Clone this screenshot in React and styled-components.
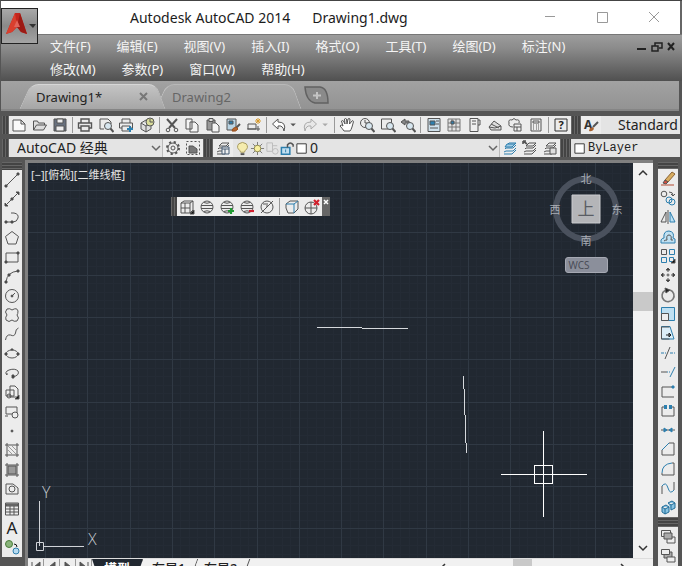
import styled, { createGlobalStyle, css } from "styled-components";

const GlobalStyle = createGlobalStyle`
    * {
        box-sizing: border-box;
    }

    body {
        margin: 0;
        overflow: hidden;
        background-color: #555;
        font-family: "Noto Sans", "Noto Sans CJK SC", sans-serif;
    }

    button, select {
        font-family: inherit;
        margin: 0;
        padding: 0;
        border: 0;
        background: none;
    }
`

const Window = styled.div`
    display: flex;
    flex-direction: column;
    height: 100vh;
    border-top: 1px solid #444;
    border-left: 1px solid #555;
    position: relative;
    overflow: hidden;
`

const TitleBar = styled.header`
    display: flex;
    flex: 0 0 33px;
    align-items: center;
    justify-content: space-between;
    padding-left: 129px;
    background-color: #fff;
    border-right: 2px solid #666;
`

const Title = styled.h1`
    display: flex;
    gap: 22px;
    margin: 0;
    font-size: 14px;
    font-weight: 400;
    line-height: 20px;
    color: #1c1c1c;
    white-space: pre;
`

const WindowButtons = styled.div`
    display: flex;

    button {
        width: 52px;
        height: 30px;
    }
`

const AppButton = styled.button`
    position: absolute;
    top: 7px;
    left: 0;
    display: flex;
    align-items: center;
    width: 37px;
    height: 36px;
    border: 1px solid #222;
    background: linear-gradient(#a9a9a9, #8a8a8a 50%, #a4a4a4);
`

const MenuBar = styled.nav`
    display: flex;
    flex: 0 0 46px;
    padding-left: 49px;
    background: linear-gradient(#9d9d9d, #8a8a8a 30%, #505050);
    border-top: 1px solid #777;
`

const Menus = styled.div`
    display: flex;
    flex: 1;
    flex-wrap: wrap;
    align-content: flex-start;
    column-gap: 26px;

    button {
        height: 23px;
        font-size: 13px;
        line-height: 23px;
        color: #f4f4f4;
    }
`

const DocButtons = styled.div`
    display: flex;
    padding: 3px 3px 0 16px;

    button {
        width: 15px;
        height: 16px;
    }
`

const TabBar = styled.div`
    display: flex;
    flex: 0 0 30px;
    align-items: flex-end;
    padding-left: 24px;
    margin-right: 3px;
    background: linear-gradient(#a2a2a2, #939393);
    border-bottom: 2px solid #858585;
`

const Tab = styled.button`
    position: relative;
    display: flex;
    align-items: center;
    justify-content: space-between;
    width: 136px;
    height: 25px;
    padding: 0 12px 0 11px;
    font-size: 13px;
    color: ${(p) => (p.$active ? "#222" : "#666")};
    z-index: ${(p) => (p.$active ? 1 : 0)};

    &::before, &::after {
        content: "";
        position: absolute;
        z-index: -1;
        top: 0;
        bottom: 0;
        background: ${(p) => (p.$active ? "linear-gradient(#c4c4c4, #a6a6a6)" : "linear-gradient(#a9a9a9, #9b9b9b)")};
        border-top: 1px solid ${(p) => (p.$active ? "#d6d6d6" : "#b8b8b8")};
    }

    &::before {
        left: 0;
        right: 40%;
        transform: skewX(-24deg);
        border-left: 1px solid #c4c4c4;
        border-radius: 8px 0 0 0;
    }

    &::after {
        left: 40%;
        right: 0;
        transform: skewX(20deg);
        border-right: 1px solid #bdbdbd;
        border-radius: 0 8px 0 0;
    }
`

const NewTab = styled.button`
    width: 26px;
    height: 24px;
    margin-left: 7px;
`

const ToolRow = styled.div`
    display: flex;
    flex: 0 0 18px;
    margin: ${(p) => p.$margin};
`

const Grip = styled.span`
    flex: 0 0 ${(p) => p.$size || 7}px;
    background: ${(p) => (p.$flat
        ? "repeating-linear-gradient(#666 0 1px, #444 1px 3px)"
        : "repeating-linear-gradient(90deg, #666 0 1px, #444 1px 3px)")};
`

const Toolbar = styled.div`
    display: flex;
    flex: ${(p) => p.$flex || "0 0 auto"};
    flex-direction: ${(p) => (p.$column ? "column" : "row")};
    background-color: #ececec;
    min-width: 0;
`

const Tool = styled.button`
    display: flex;
    flex: ${(p) => (p.$fixed ? "0 0 20px" : "1 1 0")};
    align-items: center;
    justify-content: center;
    min-width: 0;
    min-height: 0;

    ${(p) => p.$narrow && css`
        flex: 0 0 11px;
    `}
`

const Separator = styled.span`
    flex: 0 0 1px;
    margin: 1px 2px;
    background-color: #999;
`

const Field = styled.label`
    display: flex;
    flex: ${(p) => p.$flex || "1"};
    align-items: center;
    min-width: 0;
    padding-left: ${(p) => p.$pad || 0}px;
    background-color: #e4e4e4;
    border-right: ${(p) => (p.$line ? "1px solid #bbb" : "0")};
    overflow: hidden;

    select {
        flex: 1;
        min-width: 0;
        height: 18px;
        appearance: none;
        font-family: ${(p) => (p.$mono ? '"Liberation Mono", monospace' : "inherit")};
        font-size: ${(p) => (p.$mono ? 12 : 14)}px;
        line-height: 18px;
        color: #222;
    }

    > svg {
        flex: none;
    }
`

const Workspace = styled.main`
    display: flex;
    flex: 1;
    min-height: 0;
`

const Side = styled.aside`
    display: flex;
    flex-direction: column;
    flex: 0 0 20px;
    margin: ${(p) => p.$margin};
`

const Center = styled.section`
    display: flex;
    flex: 1;
    flex-direction: column;
    min-width: 0;
    border-top: 3px solid #808080;
    border-left: 3px solid #808080;
`

const View = styled.div`
    display: flex;
    flex: 1;
    min-height: 0;
`

const Canvas = styled.div`
    flex: 1;
    position: relative;
    overflow: hidden;
    background-color: #212831;

    > svg {
        display: block;
    }
`

const ViewLabel = styled.div`
    position: absolute;
    top: 4px;
    left: 3px;
    font-size: 11px;
    line-height: 16px;
    color: #e4e4e4;
`

const FloatBar = styled.div`
    position: absolute;
    top: 34px;
    left: 143px;
    display: flex;
    height: 19px;
`

const FloatClose = styled.button`
    display: flex;
    width: 8px;
    padding-top: 1px;
    background-color: #666;
`

const Navigator = styled.div`
    position: absolute;
    top: 6px;
    right: 8px;
    display: flex;
    flex-direction: column;
    align-items: center;
    gap: 6px;
`

const WcsButton = styled.button`
    width: 43px;
    height: 16px;
    padding-left: 3px;
    border: 1px solid #a6a9b3;
    border-radius: 3px;
    background-color: #8b8f9b;
    font-size: 10px;
    line-height: 12px;
    text-align: left;
    color: #4a4d57;
`

const Ucs = styled.svg`
    position: absolute;
    left: 7px;
    bottom: 0;
`

const Scroll = styled.div`
    display: flex;
    flex: 0 0 ${(p) => (p.$column ? 20 : 200)}px;
    flex-direction: ${(p) => (p.$column ? "column" : "row")};
    background-color: #f1f1f1;

    button {
        flex: 0 0 20px;
        display: flex;
        align-items: center;
        justify-content: center;
    }
`

const Thumb = styled.span`
    flex: 0 0 19px;
    background-color: #c9c9c9;
`

const Space = styled.span`
    flex: ${(p) => p.$grow};
`

const Bottom = styled.footer`
    display: flex;
    align-items: flex-start;
    justify-content: space-between;
    flex: 0 0 8px;
    overflow: hidden;
    padding-right: 20px;
    border-top: 1px solid #ddd;
    background-color: #f1f1f1;

    > div {
        display: flex;
        height: 18px;
    }
`

const PageButton = styled.button`
    width: 16px;
    background-color: #eee;
    border-right: 1px solid #999;
`

const LayoutTab = styled.button`
    height: 18px;
    padding: 0 9px;
    font-size: 13px;
    font-weight: 500;
    line-height: 18px;
    color: #222;
    background-color: #f1f1f1;
    border-right: 1px solid #555;
    transform: skewX(-20deg);

    span {
        display: block;
        transform: skewX(20deg);
    }

    ${(p) => p.$active && css`
        padding: 0 12px;
        font-weight: 700;
        color: #fff;
        background-color: #212831;
        transform: none;
        clip-path: polygon(0 0, 100% 0, 88% 100%, 12% 100%);

        span {
            transform: none;
        }
    `}
`

const B = "#2d7fae"
const sheet = <path d="M2 3h8l4 4v7H2zM10 3v4h4" fill="#fafafa" />
const printer = <path d="M4 6V2h8v4M4 11H1.500V6h13v5H12M4 9h8v5H4z" />
const lens = <><circle cx="10" cy="9" r="3.500" fill="#d7e6ef" /><path d="M12.500 11.500l3 3.500" strokeWidth="2" /></>
const globe = <><circle cx="8" cy="8" r="6" /><path d="M2 6.500h12M2 9.500h12M5 3.500q3 1.500 6 0M5 12.500q3-1.500 6 0" /></>
const layers = <path d="M4 6l3-3h7l-3 3zM3 9l1-1h7l3-3M2 12l2-1h7l3-3M2 14h8l4-4" />

// every drawing sits on a 16 x 16 grid
const icons = {
    new: sheet,
    open: <path d="M1.500 13V4h4l1 2h6v2M1.500 13l3-5h10l-3 5z" fill="#ddd" />,
    save: <><path d="M2 2h12v12H2z" fill="#68717e" /><path d="M5 2h6v4H5zM4 9h8v5H4z" fill="#eee" /></>,
    print: <g strokeWidth="1.400">{printer}</g>,
    preview: <><path d="M2 12V2h8l3 3v2M2 12h4" />{lens}</>,
    publish: <>{printer}<path d="M9 12h6M12 9v6" stroke={B} strokeWidth="2" /></>,
    dwf: <><path d="M2 6l5-3 5 3v6l-5 3-5-3zM2 6l5 3 5-3M7 9v6" fill="#ddd" /><circle cx="11" cy="5" r="4" fill="#d9dc9a" /><path d="M11 2v3h3" /></>,
    cut: <><path d="M3 2l8 9M13 2l-8 9" strokeWidth="2" /><circle cx="4" cy="13" r="1.800" /><circle cx="12" cy="13" r="1.800" /></>,
    copy: <path d="M2 2h6v10H2zM6 5h5l3 3v7H6z" fill="#f4f4f4" />,
    paste: <><path d="M2 3h8v10H2z" fill="#999" /><path d="M4 1.500h4v3H4z" fill="#ddd" /><path d="M7 6h4l3 3v6H7z" fill="#f4f4f4" /></>,
    match: <><path d="M2 2h9v11H2z" fill="#b9d4e4" /><path d="M4 4h4v3H4z" fill={B} /><path d="M15 7l-4 4" strokeWidth="2" /><path d="M7 14q0-3 4-4l2 2q-2 3-6 2z" fill="#b5652f" stroke="#96501f" /></>,
    block: <><path d="M2 7h8v5H2z" /><path d="M1 12h13M12 9v5" /><path d="M12 1v6M9 4h6M10 2l4 4M14 2l-4 4" stroke="#d69a2d" /></>,
    undo: <path d="M7 2L1.500 7 7 12V9q5-1 6 5 3-9-6-9z" fill="#fff" />,
    redo: <path d="M9 2l5.500 5L9 12V9q-5-1-6 5-3-9 6-9z" fill="#e8e8e8" stroke="#aaa" />,
    down: <path d="M2 5h8l-4 4z" fill="#555" stroke="none" />,
    downOff: <path d="M2 5h8l-4 4z" fill="#aaa" stroke="none" />,
    pan: <path d="M5 14q-2-3-4-5 1-2 3 0L2.500 4q1-1 2 0L6 7 5.500 2q1-1 2 0L8 7l1-5q1-1 2 0l-.5 5L13 4q1-1 1.500.5L13 10q-1 3-2 4z" fill="#fff" />,
    zoomRt: <><circle cx="6" cy="6" r="4.500" /><path d="M6 3v3h3" />{lens}</>,
    zoomWin: <><path d="M1.500 2h10v10h-10z" />{lens}</>,
    zoomPrev: <><path d="M5 2L1 5l4 3V6h4V4H5z" fill="#888" />{lens}</>,
    props: <><path d="M2 1.500h12v13H2z" fill="#cfe1ec" /><path d="M4 4h5v4H4z" fill={B} /><path d="M10 4h3M10 7h3M4 11h8" /></>,
    center: <><path d="M2 2h12v12H2zM2 6h12M6 2v12M10 2v12M2 10h12" fill="#e2e2e2" stroke="#777" /><path d="M5 4h3v3H5z" fill={B} /></>,
    palette: <><path d="M4 1.500h8v13H4z" fill="#f0f0f0" /><path d="M6 4h4M6 7h4M12 3h2v5h-2" /></>,
    sheets: <path d="M2 10l5-6 7 5v4H4zM2 10l6 1 6-2M4 7l8 4" fill="#ddd" />,
    markup: <><path d="M2 6q-1-4 3-3 2-3 4 0 4-1 3 3M2 6q-1 4 4 4" /><path d="M7 7h7v7H7zM7 10h7M10 10v4" fill="#eee" /></>,
    calc: <path d="M3 2h10v12H3zM5 4h6v2H5zM5 8h1M8 8h1M10 8h1M5 10h1M8 10h1M10 10h1M5 12h1M8 12h1M10 12h1" />,
    gear: <><circle cx="8" cy="8" r="5" /><circle cx="8" cy="8" r="2" /><circle cx="8" cy="8" r="6" strokeWidth="2" strokeDasharray="2.200 2.510" /></>,
    workspace: <><path d="M1.500 1.500h13v13h-13z" strokeDasharray="2 2" /><path d="M4 13V6h4l4 3v4z" fill="#777" /></>,
    layerProps: <>{layers}<path d="M7 7h7v7H7zM7 9h7M10 9v5" fill="#f0f0f0" stroke="#445b72" /></>,
    bulb: <><path d="M5 10Q1 7 4 3q4-3 8 0 3 4-1 7l-1 2H6z" fill="#f5ecae" stroke="#a2955a" /><path d="M6 14h4" strokeWidth="2" /></>,
    sun: <><path d="M8 1v14M1 8h14M3 3l10 10M13 3L3 13" stroke="#777" /><circle cx="8" cy="8" r="3.500" fill="#f8f0a0" stroke="#8d8648" /></>,
    freeze: <g stroke="#bbb"><path d="M2 2h6v9H2zM8 5h5" /><circle cx="11" cy="11" r="3" /></g>,
    unlock: <><path d="M1.500 7h9v7h-9z" fill="#c2dff0" stroke={B} strokeWidth="1.600" /><path d="M6 9v3" stroke={B} /><path d="M8 7V4q3-4 6 0v2" strokeWidth="1.600" /></>,
    square: <path d="M2 3h10v10H2z" fill="#fff" stroke="#333" />,
    layerCur: <g stroke={B}>{layers}<path d="M5 4h8l-3 3H3z" fill="#9fcbe4" /></g>,
    layerPrev: <>{layers}<path d="M1 1l4 3M1 1v3M1 1h3" strokeWidth="1.600" /></>,
    layerState: <>{layers}<path d="M8 8h6v6H8z" fill="#ddd" /></>,
    line: <><path d="M2 14L14 2" /><path d="M1 13h2v2H1zM13 1h2v2h-2z" fill="#333" /></>,
    xline: <><path d="M2 14L14 2" /><path d="M1 12v3h3zM12 1h3v3zM7 7h2v2H7z" fill="#333" /></>,
    pline: <><path d="M7 3h3q5 1 4 5-1 4-5 4H2" /><path d="M1 11h2v2H1zM7 11h2v2H7z" fill="#333" /></>,
    polygon: <path d="M8 1.500l6.500 5L12 14H4L1.500 6.500z" />,
    rect: <><path d="M2 4h12v9H2z" /><path d="M1 12h2v2H1zM13 3h2v2h-2z" fill="#333" /></>,
    arc: <><path d="M2 14Q3 4 14 3" /><path d="M1 13h2v2H1zM4 6h2v2H4zM13 2h2v2h-2z" fill="#333" /></>,
    circle: <><circle cx="8" cy="8" r="6.500" /><path d="M8 8l3-3" /><circle cx="8" cy="8" r="1" fill="#333" /></>,
    cloud: <path d="M8 3q5-3 6 1 0 3-1 4 3 3 0 6-3 1-5-1-3 3-6 0-1-3 1-5-3-3 0-6 3-1 5 1z" />,
    spline: <path d="M1.500 14q1-6 5-5 4 2 5-2 0-4 3-5" />,
    ellipse: <><ellipse cx="8" cy="8" rx="6" ry="4" /><path d="M1 7h2v2H1zM13 7h2v2h-2zM7 3h2v1H7z" fill="#333" /></>,
    ellipseArc: <><path d="M3 10Q0 7 5 5q6-2 9 1 2 4-5 6" /><path d="M8 10h2v3H8zM3 8v2" fill="#333" /></>,
    insert: <><path d="M6 2h5l3 3v8H6zM2 6h8v6H2z" fill="#eee" /><circle cx="5" cy="12" r="2" /><path d="M15 11v4h-4z" fill="#111" /></>,
    makeBlock: <><path d="M2 3h11v7H2z" /><circle cx="11" cy="11" r="3" fill="#eee" /><path d="M1 12h3" /></>,
    point: <circle cx="8" cy="8" r="1" fill="#444" />,
    hatch: <><path d="M3 1v14M13 1v14M1 3h14M1 13h14" /><path d="M4 4l8 8M8 4l4 4M4 8l4 4" stroke="#999" /></>,
    gradient: <><path d="M4 4h8v8H4z" fill="#999" /><path d="M3 1v14M13 1v14M1 3h14M1 13h14" /></>,
    region: <><path d="M2 13V3h7l5 4v6z" /><circle cx="8" cy="8" r="3" /></>,
    table: <><path d="M1.500 2h13v12h-13zM1.500 8h13M1.500 11h13M6 5v9M10 5v9" /><path d="M2 3h12v2H2z" fill="#777" /></>,
    addSel: <><circle cx="5" cy="5" r="3.500" fill="#8ab47c" stroke="#4b7d3c" /><circle cx="12" cy="12" r="3" fill="#b7daf0" stroke={B} /><path d="M10 5q3 0 3 3" stroke="#111" /></>,
    erase: <><path d="M5 9l7-8 3 2-7 8z" fill="#d8ad60" stroke="#8c6434" /><path d="M5 9l3 2-2 2-3-1z" fill="#d34d3f" /><path d="M1 14h13" stroke="#b34a32" /></>,
    copyObj: <><circle cx="4" cy="4" r="2.800" /><path d="M9 2q4 0 4 3M11 4l2 2 2-2" /><circle cx="9" cy="10" r="3" stroke={B} /><circle cx="12" cy="12" r="3" stroke={B} /></>,
    mirror: <><path d="M6 3v10H1z" /><path d="M10 3v10h5z" fill="#bfe0f2" stroke={B} /><path d="M8 1v14" /></>,
    offset: <><path d="M1 14v-3q1-2 3-2-1-7 5-7 6 1 4 7l2 1v4z" fill="#bfe0f2" stroke={B} /><path d="M4 12q1-1 3-1-1-5 2-5t2 5h2" /></>,
    array: <><path d="M1.500 1.500h5v5h-5z" /><path d="M9.500 1.500h5v5h-5zM1.500 9.500h5v5h-5zM9.500 9.500h4v4h-4z" stroke={B} /><path d="M15 11v4h-4z" fill="#111" /></>,
    move: <><path d="M8 2v12M2 8h12" strokeDasharray="3 1.500" /><path d="M6 3l2-2 2 2zM6 13l2 2 2-2zM3 6L1 8l2 2zM13 6l2 2-2 2z" fill="#333" /></>,
    rotate: <><path d="M5 3.500a6 6 0 1 0 5-.5" strokeWidth="1.600" stroke="#777" /><path d="M5 1l5 2-4 3z" fill="#222" /></>,
    scale: <><path d="M1.500 1.500h13v13h-13z" fill="#bfe0f2" stroke={B} /><path d="M1.500 7.500h7v7h-7z" fill="#eee" /></>,
    stretch: <><path d="M1.500 14V1.500H10l4 12.500z" fill="#dceef8" stroke={B} /><path d="M1.500 2h8M1.500 2v12h8" /><path d="M6 10h4M9 8l2 2-2 2z" stroke="#222" /></>,
    trim: <><path d="M1 8h5M10 8h5" strokeDasharray="3 1" stroke={B} /><path d="M5 14l5-12" /></>,
    extend: <><path d="M1 8h6" /><path d="M7 8h4" strokeDasharray="1 1" stroke={B} /><path d="M10 13l5-10" stroke={B} /></>,
    breakAt: <><path d="M2 14V4h12M2 14h12" /><path d="M12 3h2v2h-2z" fill={B} stroke={B} /></>,
    breakTwo: <><path d="M5 4H2v9h12V4h-3" /><path d="M5 3h1v2H5zM10 3h1v2h-1z" fill={B} stroke={B} strokeWidth="2" /></>,
    join: <><path d="M1 8h14" /><path d="M4 6l3 2-3 2zM12 6L9 8l3 2z" fill={B} stroke={B} /></>,
    chamfer: <><path d="M14 14V2H9M2 9v5h12" /><path d="M2 9l7-7" stroke={B} /></>,
    fillet: <><path d="M14 14V2h-2M2 12v2h12" /><path d="M2 12Q2 3 12 2" stroke={B} /></>,
    blend: <><path d="M2 14V6M14 10V2" /><path d="M2 6q4-5 6 2t6 2" stroke={B} /></>,
    explode: <path d="M2 7l4-2 3 2v5l-4 2-3-2zM2 7l3 2 4-2M5 9v5M8 3l4-2 3 2v5l-4 2M8 3l3 2 4-2M11 5v5" fill="#88c3e2" stroke="#216c98" />,
    front: <><path d="M1.500 1.500h9v6h-9z" /><path d="M7 8h8v6H7z" /><path d="M4 4h8v6H4z" fill="#aaa" /></>,
    back: <><path d="M4 4h8v6H4z" fill="#aaa" /><path d="M1.500 1.500h8v5h-8zM7 9h8v5H7z" fill="#eee" /></>,
    wire2d: <><path d="M2 4h9v10H2zM2 4l3-2h9v9l-3 3M11 4l3-2M6 4v10M2 9h9" /><path d="M15 11v4h-4z" fill="#111" /></>,
    globe: globe,
    globeAdd: <>{globe}<path d="M9 12h6M12 9v6" stroke="#219a32" strokeWidth="2.200" /></>,
    globeSub: <>{globe}<path d="M10 12h5" stroke="#d01f2e" strokeWidth="2.200" /></>,
    globeOff: <><circle cx="8" cy="8" r="6" /><path d="M2 14L14 2M8 4v4M4 5h3" /></>,
    face: <><path d="M2 5l4-3h8v8l-4 4H4L2 9z" /><path d="M2 5h8l4-3M10 5v9" stroke={B} /></>,
    globeDel: <><circle cx="7" cy="9" r="6" /><path d="M1 9h12M7 3v12" /><path d="M10 1l5 5M15 1l-5 5" stroke="#d2202c" strokeWidth="2.200" /></>,
}

function Icon({ name, size = 16 }) {
    return (
        <svg width={size} height={size} viewBox="0 0 16 16" fill="none" stroke="#555" aria-hidden="true">
            {icons[name]}
        </svg>
    )
}

const Chevron = ({ turn = 0, color = "#666" }) => (
    <svg width="12" height="12" viewBox="0 0 12 12" fill="none" stroke={color} strokeWidth="1.500">
        <path d="M2 4l4 4 4-4" transform={`rotate(${turn} 6 6)`} />
    </svg>
)

const Glyph = styled.span`
    font-size: 17px;
    line-height: 18px;
    color: #222;
`

const menus = ["文件(F)", "编辑(E)", "视图(V)", "插入(I)", "格式(O)", "工具(T)", "绘图(D)", "标注(N)", "修改(M)", "参数(P)", "窗口(W)", "帮助(H)"]

const standard = ["new", "open", "save", "|", "print", "preview", "publish", "dwf", "|", "cut", "copy", "paste", "match", "block", "|",
    "undo", "down", "redo", "downOff", "|", "pan", "zoomRt", "zoomWin", "zoomPrev", "|", "props", "center", "palette", "sheets", "markup", "calc", "|", "help"]
const draw = ["line", "xline", "pline", "polygon", "rect", "arc", "circle", "cloud", "spline", "ellipse", "ellipseArc", "insert", "makeBlock",
    "point", "hatch", "gradient", "region", "table", "text", "addSel"]
const modify = ["erase", "copyObj", "mirror", "offset", "array", "move", "rotate", "scale", "stretch", "trim", "extend", "breakAt", "breakTwo",
    "join", "chamfer", "fillet", "blend", "explode"]
const styles = ["wire2d", "globe", "globeAdd", "globeSub", "globeOff", "|", "face", "globeDel"]

function Tools({ items, fixed }) {
    return items.map((name, i) => {
        if (name === "|") return <Separator key={i} />
        return (
            <Tool key={i} aria-label={name} $fixed={fixed} $narrow={name.startsWith("down")}>
                {name === "text" && <Glyph>A</Glyph>}
                {name === "help" && (
                    <svg width="14" height="14" fill="none" stroke="#333">
                        <path d="M1 1h12v12H1z" />
                        <text x="7" y="11" fontSize="11" fontWeight="700" textAnchor="middle" fill="#222" stroke="none">?</text>
                    </svg>
                )}
                {icons[name] && <Icon name={name} size={name.startsWith("down") ? 11 : 16} />}
            </Tool>
        )
    })
}

const MAJOR = 42.3
const MINOR = MAJOR / 5

function Grid() {
    const lines = []
    for (let i = 0; i < 240; i++) {
        const x = Math.round(17 - MAJOR + i * MINOR)
        const y = Math.round(27 - MAJOR + i * MINOR)
        const stroke = i % 5 === 0 ? "#303944" : "#242b35"
        lines.push(<path key={i} stroke={stroke} d={`M${x} 0v2000M0 ${y}h2000`} />)
    }
    // major lines go last so they stay on top
    return lines.filter((l, i) => i % 5).concat(lines.filter((l, i) => i % 5 === 0))
}

function Drawing() {
    return (
        <svg width="100%" height="100%" fill="none" stroke="#d5d8dc" shapeRendering="crispEdges">
            <Grid />
            <path d="M289 164h45M334 165h46M435 213v13M436 226v26M437 252v28M438 280v10" />
            <g stroke="#fff">
                <path d="M473 311h86M515 268v86" />
                <path d="M506 302h18v18h-18z" />
            </g>
        </svg>
    )
}

function Compass() {
    return (
        <svg width="78" height="82" viewBox="0 0 78 82" fontSize="11" textAnchor="middle" fill="#a9adb5">
            <circle cx="39" cy="40" r="30" fill="none" stroke="#4a515d" strokeWidth="6" />
            <path d="M25 26h28v28H25z" fill="#b4b5b8" stroke="#cbccd0" />
            <text x="39" y="46" fontSize="17" fill="#5a5d64">上</text>
            <text x="39" y="14">北</text>
            <text x="39" y="76">南</text>
            <text x="8" y="45">西</text>
            <text x="70" y="45">东</text>
        </svg>
    )
}

export default function App() {
    return (
        <Window>
            <GlobalStyle />
            <TitleBar>
                <Title><span>Autodesk AutoCAD 2014</span><span>Drawing1.dwg</span></Title>
                <WindowButtons>
                    <button aria-label="minimize"><svg width="12" height="12" stroke="#999"><path d="M1 5.500h10" /></svg></button>
                    <button aria-label="maximize"><svg width="12" height="12" fill="none" stroke="#999"><path d="M1.500 1.500h10v10h-10z" /></svg></button>
                    <button aria-label="close"><svg width="12" height="12" stroke="#999"><path d="M1 1l10 10M11 1L1 11" /></svg></button>
                </WindowButtons>
            </TitleBar>
            <MenuBar>
                <Menus>
                    {menus.map((m) => <button key={m}>{m}</button>)}
                </Menus>
                <DocButtons>
                    <button aria-label="minimize drawing"><svg width="10" height="10" stroke="#222" strokeWidth="2"><path d="M0 7h9" /></svg></button>
                    <button aria-label="restore drawing"><svg width="12" height="10" fill="none" stroke="#222"><path d="M4 4V1h7v5H8M1 4h6v5H1z" strokeWidth="1.500" /></svg></button>
                    <button aria-label="close drawing"><svg width="9" height="10" stroke="#222" strokeWidth="2"><path d="M1 1l6 7M7 1L1 8" /></svg></button>
                </DocButtons>
            </MenuBar>
            <AppButton aria-label="application menu">
                <svg width="35" height="34">
                    <path d="M4 25L13 4h5l7 21-6-2-4-5-5 5z" fill="#c4261d" />
                    <path d="M13 4l2 14-5 5-6 2z" fill="#d93f2e" />
                    <path d="M18 4l7 21-6-2-4-5z" fill="#9c1a14" />
                    <path d="M12 18h6l-3-7z" fill="#e2645a" />
                    <path d="M27 15h7l-3 4z" fill="#333" />
                </svg>
            </AppButton>
            <TabBar>
                <Tab $active>
                    Drawing1*
                    <svg width="10" height="10" stroke="#777" strokeWidth="2"><path d="M1 1l7 7M8 1L1 8" /></svg>
                </Tab>
                <Tab>Drawing2</Tab>
                <NewTab aria-label="new drawing">
                    <svg width="26" height="20" fill="#8a8a8a" stroke="#626262" strokeWidth="1.500">
                        <path d="M1 2h15q8 1 8 16H11Q2 16 1 2z" />
                        <path d="M13 7v7M9 10.500h8" stroke="#c4c4c4" strokeWidth="2" />
                    </svg>
                </NewTab>
            </TabBar>
            <ToolRow $margin="5px 2px 0 1px">
                <Grip />
                <Toolbar $flex="1"><Tools items={standard} /></Toolbar>
                <Grip $size={10} />
                <Toolbar $flex="0 0 99px">
                    <Tool $fixed aria-label="text style">
                        <svg width="18" height="18">
                            <text x="2" y="13" fontSize="12" fontWeight="700" fill="#333">A</text>
                            <path d="M16 6l-5 5" stroke="#555" strokeWidth="2" />
                            <path d="M7 15q0-3 4-4l1 2q-2 3-5 2z" fill="#a8622f" />
                        </svg>
                    </Tool>
                    <Field $pad={17}>
                        <select aria-label="text style name"><option>Standard</option></select>
                    </Field>
                </Toolbar>
            </ToolRow>
            <ToolRow $margin="5px 2px 3px 1px">
                <Grip />
                <Toolbar $flex="0 0 194px">
                    <Field $pad={8} $line>
                        <select aria-label="workspace"><option>AutoCAD 经典</option></select>
                        <Chevron />
                    </Field>
                    <Tools items={["gear", "workspace"]} fixed />
                </Toolbar>
                <Grip $size={10} />
                <Toolbar $flex="1">
                    <Tools items={["layerProps"]} fixed />
                    <Field $pad={2} $line>
                        {["bulb", "sun", "freeze", "unlock", "square"].map((n) => <Icon key={n} name={n} size={15} />)}
                        <select aria-label="layer"><option>0</option></select>
                        <Chevron />
                    </Field>
                    <Tools items={["layerCur", "layerPrev", "layerState"]} fixed />
                </Toolbar>
                <Grip $size={11} />
                <Toolbar $flex="0 0 109px">
                    <Field $pad={2} $mono>
                        <Icon name="square" size={15} />
                        <select aria-label="colour"><option>ByLayer</option></select>
                    </Field>
                </Toolbar>
            </ToolRow>
            <Workspace>
                <Side $margin="2px 3px 9px 1px">
                    <Grip $flat $size={8} />
                    <Toolbar $flex="1" $column><Tools items={draw} /></Toolbar>
                </Side>
                <Center>
                    <View>
                        <Canvas>
                            <Drawing />
                            <ViewLabel>[−][俯视][二维线框]</ViewLabel>
                            <FloatBar>
                                <Grip $size={6} />
                                <Toolbar><Tools items={styles} fixed /></Toolbar>
                                <FloatClose aria-label="close toolbar">
                                    <svg width="8" height="8" stroke="#fff" strokeWidth="1.500"><path d="M2 2l4 4M6 2L2 6" /></svg>
                                </FloatClose>
                            </FloatBar>
                            <Navigator>
                                <Compass />
                                <WcsButton>WCS</WcsButton>
                            </Navigator>
                            <Ucs width="72" height="80" fill="none" stroke="#d0d3d8">
                                <path d="M4.500 23v45M9 68.500h40" />
                                <path d="M1.500 64.500h7v8h-7z" />
                                <g fill="#c6cad0" stroke="none" fontSize="16" fontFamily="Open Sans" fontWeight="300">
                                    <text x="7" y="20">Y</text>
                                    <text x="53" y="67">X</text>
                                </g>
                            </Ucs>
                        </Canvas>
                        <Scroll $column>
                            <button aria-label="scroll up"><Chevron turn={180} color="#333" /></button>
                            <Space $grow={12} />
                            <Thumb />
                            <Space $grow={25} />
                            <button aria-label="scroll down"><Chevron color="#333" /></button>
                        </Scroll>
                    </View>
                    <Bottom>
                        <div>
                            {["M4 3v9M12 3L6 8l6 5z", "M11 3L5 8l6 5z", "M5 3l6 5-6 5z", "M12 3v9M4 3l6 5-6 5z"].map((d) => (
                                <PageButton key={d} aria-label="page">
                                    <svg width="15" height="16" fill="#555" stroke="#555"><path d={d} /></svg>
                                </PageButton>
                            ))}
                            <LayoutTab $active><span>模型</span></LayoutTab>
                            <LayoutTab><span>布局1</span></LayoutTab>
                            <LayoutTab><span>布局2</span></LayoutTab>
                        </div>
                        <Scroll>
                            <button aria-label="scroll left"><Chevron turn={90} color="#333" /></button>
                            <Space $grow={3} />
                            <Thumb />
                            <Space $grow={4} />
                            <button aria-label="scroll right"><Chevron turn={270} color="#333" /></button>
                        </Scroll>
                    </Bottom>
                </Center>
                <Side $margin="2px 4px 0 5px">
                    <Grip $flat $size={7} />
                    <Toolbar $flex="18" $column><Tools items={modify} /></Toolbar>
                    <Grip $flat $size={10} />
                    <Toolbar $flex="2" $column><Tools items={["front", "back"]} /></Toolbar>
                </Side>
            </Workspace>
        </Window>
    )
}
